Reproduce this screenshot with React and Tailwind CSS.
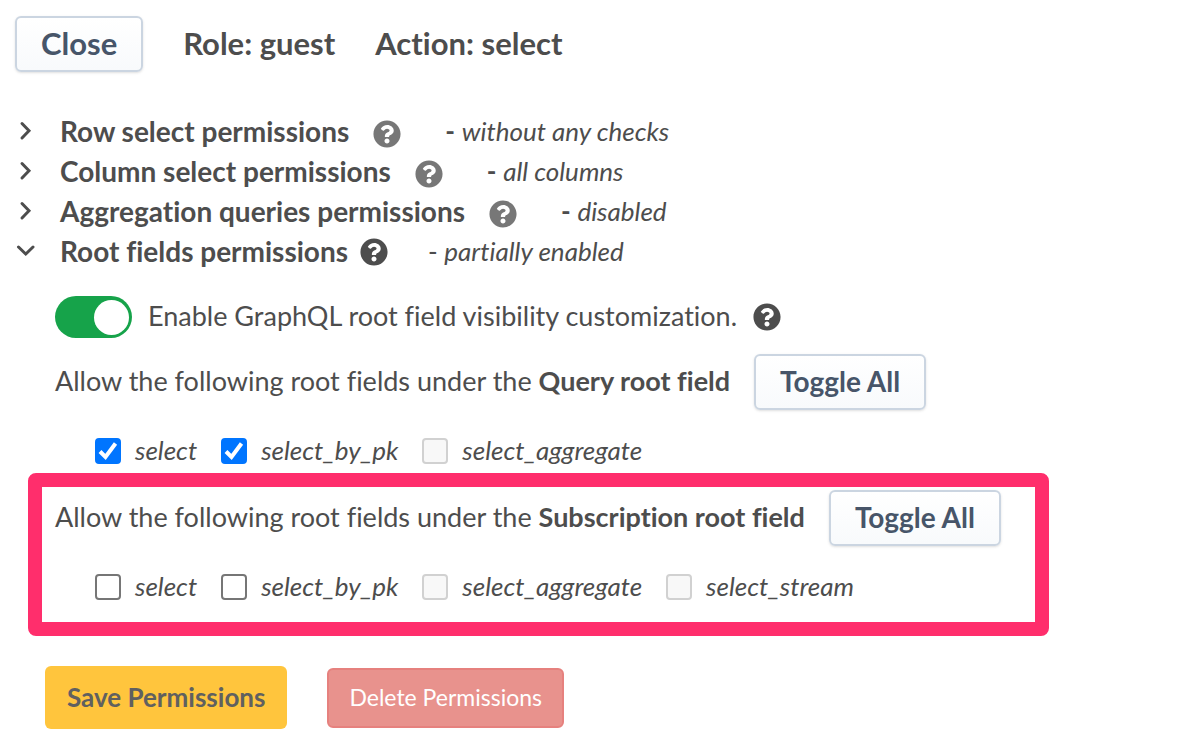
import React, { useState } from "react";
import clsx from "clsx";
import { FaQuestionCircle } from "react-icons/fa";

const sections = [
  { name: "Row select permissions", status: "without any checks" },
  { name: "Column select permissions", status: "all columns" },
  { name: "Aggregation queries permissions", status: "disabled" },
  { name: "Root fields permissions", status: "partially enabled", open: true },
];

const queryFields = [
  { name: "select", checked: true },
  { name: "select_by_pk", checked: true },
  { name: "select_aggregate", disabled: true },
];

const subscriptionFields = [
  { name: "select" },
  { name: "select_by_pk" },
  { name: "select_aggregate", disabled: true },
  { name: "select_stream", disabled: true },
];

function Chevron({ open }) {
  return (
    <svg
      viewBox="0 0 20 20"
      className="w-5 h-5 shrink-0"
      fill="none"
      stroke="currentColor"
      strokeWidth="3"
      strokeLinecap="round"
      strokeLinejoin="miter"
    >
      <path d={open ? "M2.500 6l7.250 7L17 6" : "M6 2.500l7 7.250L6 17"} />
    </svg>
  );
}

function OutlineButton({ large, children }) {
  return (
    <button
      type="button"
      className={clsx(
        "h-14 px-6 pb-0.5 rounded-md border-2 border-[#cbd5e1] bg-linear-to-b from-white to-[#f8fafc] font-bold text-[#475569] shadow-sm",
        large ? "text-[31px]" : "text-[28px]"
      )}
    >
      {children}
    </button>
  );
}

function SectionRow({ name, status, open }) {
  return (
    <div className="flex items-center h-10">
      <button
        type="button"
        aria-expanded={!!open}
        className="flex items-center gap-6 pb-0.5 text-[28px] font-bold"
      >
        <Chevron open={open} />
        {name}
      </button>
      <FaQuestionCircle
        className={clsx("w-7 h-7 shrink-0", open ? "ml-3" : "ml-6 mt-1 text-[#777]")}
      />
      <span className={clsx("pb-0.5 text-[26px]", open ? "ml-10" : "ml-11")}>
        <span className={clsx(!open && "font-bold")}>-</span> <i>{status}</i>
      </span>
    </div>
  );
}

function FieldCheckbox({ name, checked = false, disabled = false }) {
  const [on, setOn] = useState(checked);

  return (
    <label className="flex items-center gap-[14px] text-[26px] italic">
      <span className="grid shrink-0">
        <input
          type="checkbox"
          checked={on}
          disabled={disabled}
          onChange={(e) => setOn(e.target.checked)}
          className="col-start-1 row-start-1 appearance-none w-[26px] h-[26px] rounded border-2 border-[#767676] bg-white checked:border-[#0075ff] checked:bg-[#0075ff] disabled:border-[#d1d1d1] disabled:bg-[#f8f8f8]"
        />
        {on && (
          <svg
            viewBox="0 0 26 26"
            className="col-start-1 row-start-1 w-[26px] h-[26px] pointer-events-none"
            fill="none"
            stroke="#fff"
            strokeWidth="4"
          >
            <path d="M5 13.500l5.500 5.500L20.500 5.500" />
          </svg>
        )}
      </span>
      <span className="pb-0.5">{name}</span>
    </label>
  );
}

function RootFields({ type, fields }) {
  return (
    <>
      <div className="flex items-center gap-6">
        <p className="pb-0.5">
          Allow the following root fields under the <b>{type} root field</b>
        </p>
        <OutlineButton>Toggle All</OutlineButton>
      </div>
      <div className="flex items-center gap-6 mt-7 pl-10 h-[26px]">
        {fields.map((field) => (
          <FieldCheckbox key={field.name} {...field} />
        ))}
      </div>
    </>
  );
}

export default function App() {
  const [enabled, setEnabled] = useState(true);

  return (
    <main className="pt-4 pl-[15px] pb-6 bg-white font-['Lato',sans-serif] text-[27px] leading-10 text-[#4d4d4d] whitespace-nowrap [font-variant-ligatures:none]">
      <header className="flex items-center gap-10 text-[31px] font-bold">
        <OutlineButton large>Close</OutlineButton>
        <h1 className="pb-0.5">Role: guest</h1>
        <h2 className="pb-0.5">Action: select</h2>
      </header>

      <div className="mt-10 pl-px">
        {sections.map((section) => (
          <SectionRow key={section.name} {...section} />
        ))}
      </div>

      <div className="mt-6 pl-10">
        <label className="flex items-center gap-4">
          <input
            type="checkbox"
            role="switch"
            checked={enabled}
            onChange={(e) => setEnabled(e.target.checked)}
            className="appearance-none shrink-0 w-[77px] h-[42px] p-1 rounded-full bg-gray-300 checked:bg-[#16a34a] before:block before:w-[35px] before:h-[35px] before:rounded-full before:bg-white checked:before:ml-[35px]"
          />
          <span className="pb-0.5">Enable GraphQL root field visibility customization.</span>
          <FaQuestionCircle className="w-7 h-7 shrink-0" />
        </label>

        <div className="mt-4">
          <RootFields type="Query" fields={queryFields} />
        </div>
      </div>

      {/* Highlighted group */}
      <section className="w-fit mt-[9px] ml-[13px] pt-[3px] pr-[34px] pb-[22px] pl-[13px] border-14 border-[#ff2e6c] rounded-lg">
        <RootFields type="Subscription" fields={subscriptionFields} />
      </section>

      <footer className="flex items-center gap-10 mt-[30px] pl-[30px]">
        <button
          type="button"
          className="h-[63px] px-[22px] pb-0.5 rounded-md bg-[#ffc53d] text-[26px] font-bold text-[#606060]"
        >
          Save Permissions
        </button>
        <button
          type="button"
          className="h-[60px] px-5 pb-0.5 rounded-md border-2 border-[#e6817e] bg-[#e8928d] text-[23px] text-white"
        >
          Delete Permissions
        </button>
      </footer>
    </main>
  );
}
